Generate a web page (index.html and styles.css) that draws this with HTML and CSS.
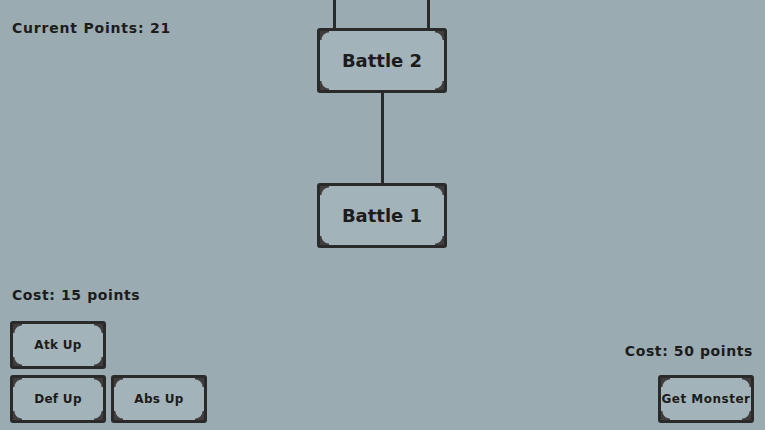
FILE: index.html
```html
<!DOCTYPE html>
<html>
<head>
<meta charset="utf-8">
<link rel="stylesheet" href="styles.css">
</head>
<body>
<div class="screen">
  <div class="left">
    <div class="label points">Current Points: 21</div>
    <div class="shop">
      <div class="label cost">Cost: 15 points</div>
      <div class="btn-grid">
        <button class="frame btn">Atk Up</button>
        <span></span>
        <button class="frame btn">Def Up</button>
        <button class="frame btn">Abs Up</button>
      </div>
    </div>
  </div>
  <div class="tree">
    <div class="top-links"><span class="link"></span><span class="link"></span></div>
    <div class="frame node">Battle 2</div>
    <div class="link mid"></div>
    <div class="frame node">Battle 1</div>
  </div>
  <div class="right">
    <div class="label cost">Cost: 50 points</div>
    <button class="frame btn wide">Get Monster</button>
  </div>
</div>
</body>
</html>
```
FILE: styles.css
```css
html, body {
  margin: 0;
  padding: 0;
}
body {
  width: 765px;
  height: 430px;
  overflow: hidden;
  background: #9aabb2;
  color: #1c1c1c;
  font-family: "DejaVu Sans", sans-serif;
  font-weight: bold;
}
.screen {
  display: grid;
  grid-template-columns: 317px 130px 1fr;
  height: 430px;
}
.label {
  font-size: 14px;
  line-height: 16px;
  letter-spacing: 0.6px;
  white-space: nowrap;
}
.left {
  display: flex;
  flex-direction: column;
  justify-content: space-between;
  padding: 20px 0 7px 10px;
}
.points { padding-left: 2px; letter-spacing: 0.8px; }
.shop {
  display: flex;
  flex-direction: column;
  gap: 18px;
}
.shop .cost { padding-left: 2px; }
.btn-grid {
  display: grid;
  grid-template-columns: 96px 96px;
  column-gap: 5px;
  row-gap: 6px;
}
.frame {
  box-sizing: border-box;
  border: 3px solid #2a2a2a;
  border-radius: 3px;
  background:
    radial-gradient(circle at 100% 100%, transparent 7px, #403d3c 8px) top left / 9px 9px no-repeat,
    radial-gradient(circle at 0 100%, transparent 7px, #403d3c 8px) top right / 9px 9px no-repeat,
    radial-gradient(circle at 100% 0, transparent 7px, #403d3c 8px) bottom left / 9px 9px no-repeat,
    radial-gradient(circle at 0 0, transparent 7px, #403d3c 8px) bottom right / 9px 9px no-repeat,
    #a3b3ba;
  color: #1c1c1c;
  font-family: inherit;
  font-weight: bold;
  display: flex;
  align-items: center;
  justify-content: center;
  white-space: nowrap;
}
.btn {
  width: 96px;
  height: 48px;
  padding: 0;
  font-size: 12px;
  letter-spacing: 0.3px;
}
.btn.wide { letter-spacing: 0.5px; }
.tree {
  display: flex;
  flex-direction: column;
}
.top-links {
  height: 28px;
  display: flex;
  justify-content: space-between;
  padding: 0 17px 0 16px;
}
.link {
  width: 3px;
  background: #2a2a2a;
}
.node {
  height: 65px;
  font-size: 18px;
}
.mid {
  height: 90px;
  align-self: center;
}
.right {
  display: flex;
  flex-direction: column;
  align-items: flex-end;
  justify-content: flex-end;
  gap: 16px;
  padding: 0 11px 7px 0;
}
.right .cost { padding-right: 1px; }
```
